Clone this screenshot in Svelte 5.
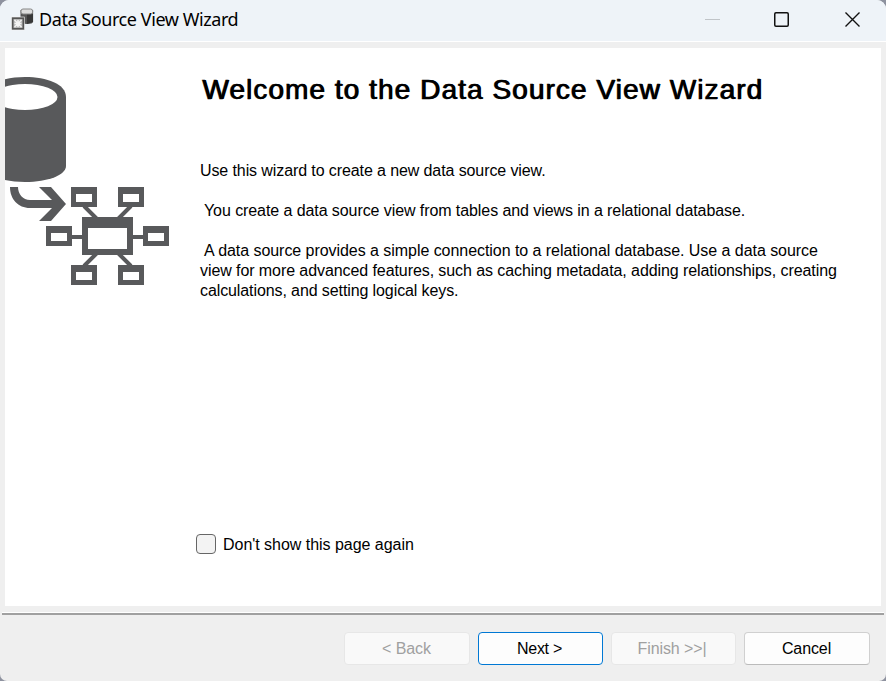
<script>
  const nodes = [[71, 187], [118, 187], [46, 226], [143, 226], [71, 265], [118, 265]];
  let skip = $state(false);
</script>

<div class="desktop">
  <div class="window">
    <header>
      <svg class="app" width="24" height="24" viewBox="0 0 24 24">
        <path d="M9.500 3v11.500q0 2.500 6.300 2.500t6.300-2.500V3z" fill="#555" />
        <path d="M16 7h6v8l-6 2z" fill="#383838" />
        <rect x="10" y="2" width="11.600" height="5" rx="2" fill="#ddd" stroke="#888" />
        <rect x="0.500" y="10" width="13" height="13" fill="#555" stroke="#f4f4f4" stroke-width=".6" />
        <rect x="2.500" y="12" width="9" height="9" fill="#b5b5b5" />
        <path d="M7 13v7M3.500 16.500h7M3.500 13l7 7M10.500 13l-7 7" stroke="#f3f3f3" stroke-width="1.5" />
      </svg>
      <span class="title">Data Source View Wizard</span>
      <div class="controls">
        <svg width="17" height="17" viewBox="0 0 17 17"><path d="M1 8.500h15" stroke="#c0c4c8" /></svg>
        <svg width="17" height="17" viewBox="0 0 17 17"><rect x="1.75" y="1.75" width="13.5" height="13.5" rx="1.2" fill="none" stroke="#111" stroke-width="1.5" /></svg>
        <svg width="17" height="17" viewBox="0 0 17 17"><path d="M1.500 1.500l14 14M15.500 1.500l-14 14" stroke="#111" stroke-width="1.4" /></svg>
      </div>
    </header>

    <main>
      <svg class="art" width="180" height="250" viewBox="5 48 180 250">
        <g fill="#58595b">
          <path d="M-16 96C-16 84 3 77 25 77S66 84 66 97v69c0 9-18 16-41 16S-16 175-16 166z" />
          <ellipse cx="25" cy="97" rx="32.5" ry="13" fill="#fff" />
          <path d="M10 187h8c0 7 5 13 12 13h22L39 187h12l15 17-15 17H39l13-13H30C18 208 10 199 10 187z" />
          <path d="M46 235h122v4H46z" />
          <path d="M84 206l13 13M131 206l-13 13M97 253l-13 13M118 253l13 13" stroke="#58595b" stroke-width="4" />
          <path d="M82 217h51v38H82z" />
          <path d="M88 228h39v21H88z" fill="#fff" />
          {#each nodes as [x, y]}
            <rect {x} {y} width="26" height="20" />
            <rect x={x + 5} y={y + 7} width="16" height="8" fill="#fff" />
          {/each}
        </g>
      </svg>
      <section>
        <h1>Welcome to the Data Source View Wizard</h1>
        <p><span class="a">Use this wizard to create a new data source view.</span></p>
        <p class="in"><span class="b">You create a data source view from tables and views in a relational database.</span></p>
        <p>
          <span class="c">A data source provides a simple connection to a relational database. Use a data source</span>
          <span class="d">view for more advanced features, such as caching metadata, adding relationships, creating</span>
          <span class="e">calculations, and setting logical keys.</span>
        </p>
        <label>
          <input type="checkbox" bind:checked={skip} />
          <span class="check-text">Don't show this page again</span>
        </label>
      </section>
    </main>

    <footer>
      <button disabled>&lt; Back</button>
      <button class="primary">Next &gt;</button>
      <button disabled class="finish">Finish &gt;&gt;|</button>
      <button>Cancel</button>
    </footer>
  </div>
</div>

<style>
  :global(body) { margin: 0; }
  .desktop { width: 886px; height: 681px; background: #8e929f; overflow: hidden; }
  .window {
    width: 886px; height: 681px; box-sizing: border-box; background: #efefef;
    border-radius: 9px 9px 7px 7px; overflow: hidden;
    font: 16px/20px "Liberation Sans", Arial, sans-serif; color: #000;
    display: flex; flex-direction: column;
  }
  header {
    height: 41px; flex: none; background: #eef3f8; border-bottom: 1px solid #fff;
    display: flex; align-items: center; box-sizing: content-box;
  }
  .app { margin: -3px 4px 0 11px; }
  .title { font: 18px/24px "Noto Sans", sans-serif; letter-spacing: -0.43px; white-space: nowrap; margin-top: -3px; }
  .controls { margin-left: auto; display: flex; gap: 54px; padding-right: 25px; margin-top: -2px; }
  .controls svg:nth-child(1) { margin-right: -2px; }
  main { margin: 6px 5px 0; height: 558px; flex: none; background: #fff; display: flex; }
  .art { flex: none; }
  section { margin-left: 15px; display: flex; flex-direction: column; flex: 1; }
  h1 {
    margin: 26px 0 55px 2px; font-size: 28px; line-height: 32px; font-weight: 400;
    letter-spacing: 1.07px; -webkit-text-stroke: 0.3px #000; text-shadow: 0.9px 0 #000; white-space: nowrap;
  }
  p { margin: 0 0 20px; }
  p span { display: block; white-space: nowrap; letter-spacing: -0.08px; }
  p .a, p .e { letter-spacing: -0.1px; }
  p .c { letter-spacing: -0.05px; }
  .in, .c { padding-left: 4px; }
  label { display: flex; align-items: center; margin: auto 0 52px -4px; height: 20px; gap: 7px; white-space: nowrap; }
  .check-text { padding-top: 2px; letter-spacing: -0.03px; }
  input {
    appearance: none; width: 20px; height: 20px; margin: 0; border: 1px solid #666;
    border-radius: 4px; background: #f3f3f3; box-sizing: border-box;
  }
  footer {
    margin: 6px 2px 0; flex: 1; border-top: 1px solid #fff; box-shadow: inset 0 2px #a0a0a0;
    display: flex; gap: 8px; justify-content: flex-end; padding: 19px 14px 0 0;
  }
  button {
    width: 126px; height: 33px; padding: 0 1px 0 0; border: 1px solid #d0d0d0; border-bottom-color: #bbb;
    border-radius: 4px; background: #fdfdfd; font: inherit; color: #000; box-sizing: border-box;
    letter-spacing: -0.1px;
  }
  button:disabled { color: #a0a0a0; background: #f9f9f9; border-color: #e7e7e7; }
  .primary { width: 125px; padding-right: 2px; border-color: #0078d4; letter-spacing: -0.3px; }
  .finish { width: 125px; padding-right: 3px; letter-spacing: -0.1px; }
</style>
